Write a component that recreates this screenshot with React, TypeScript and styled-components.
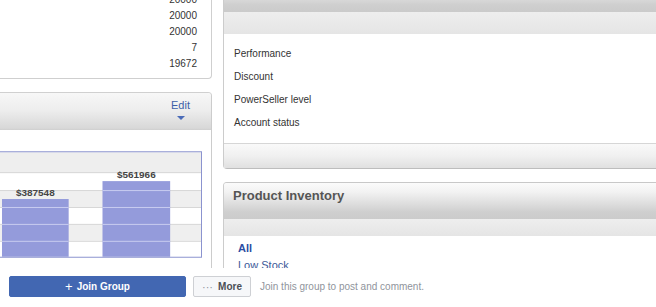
import styled, { createGlobalStyle } from 'styled-components';

const GlobalStyle = createGlobalStyle`
  html, body {
    margin: 0;
    padding: 0;
    background: #fff;
    overflow: hidden;
  }
  body {
    font-family: "Liberation Sans", Arial, Helvetica, sans-serif;
  }
`;

const totals = ['20000', '20000', '20000', '7', '19672'];
const sellerRows = ['Performance', 'Discount', 'PowerSeller level', 'Account status'];

const bars = [
  { x: 2, w: 67, top: 48, label: '$387548' },
  { x: 103, w: 68, top: 30, label: '$561966' },
];
const rowLines = [21.5, 39.5, 56.5, 73.5, 90.5];
const stripes = [
  { y: 22, h: 17, fill: '#ffffff' },
  { y: 39, h: 17, fill: '#efefef' },
  { y: 56, h: 17, fill: '#ffffff' },
  { y: 73, h: 17, fill: '#efefef' },
  { y: 90, h: 16, fill: '#ffffff' },
];

function SalesChart() {
  return (
    <svg width="204" height="107" viewBox="0 0 204 107" style={{ display: 'block' }}>
      <rect x="0" y="1" width="202" height="21" fill="#eeeeee" />
      {stripes.map((s) => (
        <rect key={s.y} x="0" y={s.y} width="202" height={s.h} fill={s.fill} />
      ))}
      {rowLines.map((y) => (
        <line key={y} x1="0" x2="202" y1={y} y2={y} stroke="#d7d7d7" />
      ))}
      {bars.map((b) => (
        <g key={b.label}>
          <rect x={b.x} y={b.top} width={b.w} height={106 - b.top} fill="#949bdb" />
          {rowLines
            .filter((y) => y > b.top)
            .map((y) => (
              <line key={y} x1={b.x} x2={b.x + b.w} y1={y} y2={y} stroke="#c9cdf0" />
            ))}
          <text
            x={b.x + b.w / 2}
            y={b.top - 3}
            textAnchor="middle"
            fontSize="10"
            fontWeight="bold"
            fill="#454545"
            fontFamily='"Liberation Sans", Arial, sans-serif'
          >
            {b.label}
          </text>
        </g>
      ))}
      <rect x="-2" y="0.5" width="204.5" height="106" fill="none" stroke="#8b93cf" />
    </svg>
  );
}

function App() {
  return (
    <>
      <GlobalStyle />
      <Post>
        <Shot>
          <Column>
            <TotalsCard>
              {totals.map((t, i) => (
                <TotalRow key={i}>{t}</TotalRow>
              ))}
            </TotalsCard>
            <ChartCard>
              <ChartHeader>
                <EditLink>
                  Edit
                  <Caret />
                </EditLink>
              </ChartHeader>
              <ChartBody>
                <SalesChart />
              </ChartBody>
            </ChartCard>
          </Column>

          <Column>
            <SideCard $cropped>
              <PanelHeader />
              <SubBand $h={22} />
              <InfoList>
                {sellerRows.map((r) => (
                  <InfoRow key={r}>{r}</InfoRow>
                ))}
              </InfoList>
              <PanelFooter />
            </SideCard>
            <SideCard>
              <PanelHeader>Product Inventory</PanelHeader>
              <SubBand $h={17} />
              <LinkList>
                <StockLink $active>All</StockLink>
                <StockLink>Low Stock</StockLink>
              </LinkList>
            </SideCard>
          </Column>
        </Shot>

        <JoinBar>
          <JoinButton>
            <Plus>+</Plus>Join Group
          </JoinButton>
          <MoreButton>
            <Dots>···</Dots>More
          </MoreButton>
          <Hint>Join this group to post and comment.</Hint>
        </JoinBar>
      </Post>
    </>
  );
}

const Post = styled.div`
  width: 656px;
  height: 307px;
  display: flex;
  flex-direction: column;
  overflow: hidden;
  background: #fff;
`;

const Shot = styled.div`
  height: 268px;
  flex: none;
  overflow: hidden;
  display: grid;
  grid-template-columns: 212px 1fr;
  column-gap: 11px;
  align-items: start;
`;

const Column = styled.div`
  display: flex;
  flex-direction: column;
  gap: 13px;
  min-width: 0;
`;

const TotalsCard = styled.div`
  margin-top: -8px;
  padding: 0 14px 6px 0;
  border-right: 1px solid #cfcfcf;
  border-bottom: 1px solid #cfcfcf;
  border-radius: 0 0 4px 0;
`;

const TotalRow = styled.div`
  text-align: right;
  font-size: 10px;
  line-height: 16px;
  color: #333;
`;

const ChartCard = styled.div`
  border-top: 1px solid #d0d0d0;
  border-right: 1px solid #cccccc;
  border-radius: 0 4px 0 0;
  height: 200px;
`;

const ChartHeader = styled.div`
  height: 37px;
  box-sizing: border-box;
  display: flex;
  justify-content: flex-end;
  padding: 6px 21px 0 0;
  background: linear-gradient(#f7f7f7, #eeeeee 45%, #d8d8d8 95%, #cfcfcf);
  border-radius: 0 4px 0 0;
`;

const EditLink = styled.div`
  display: flex;
  flex-direction: column;
  align-items: center;
  font-size: 11px;
  line-height: 13px;
  color: #3d5fa8;
`;

const Caret = styled.span`
  margin-top: 4px;
  width: 0;
  height: 0;
  border-left: 4px solid transparent;
  border-right: 4px solid transparent;
  border-top: 4px solid #4a6bb8;
`;

const ChartBody = styled.div`
  padding: 21px 8px 0 0;
  display: flex;
  justify-content: flex-end;
`;

const SideCard = styled.div<{ $cropped?: boolean }>`
  border-left: 1px solid #cccccc;
  border-top: ${(p) => (p.$cropped ? 'none' : '1px solid #c8c8c8')};
  border-radius: ${(p) => (p.$cropped ? '0 0 0 4px' : '4px 0 0 0')};
  margin-top: ${(p) => (p.$cropped ? '-24px' : '0')};
  overflow: hidden;
`;

const PanelHeader = styled.div`
  height: 36px;
  box-sizing: border-box;
  padding: 5px 9px 0;
  font-size: 13px;
  line-height: 16px;
  font-weight: bold;
  color: #555;
  background: linear-gradient(#fbfbfb, #f2f2f2 25%, #dcdcdc 60%, #cfcfcf 80%, #cbcbcb);
`;

const SubBand = styled.div<{ $h: number }>`
  height: ${(p) => p.$h}px;
  background: linear-gradient(#eeeeee, #e5e5e5);
`;

const InfoList = styled.div`
  padding: 8px 0 9px 10px;
`;

const InfoRow = styled.div`
  font-size: 10px;
  line-height: 23px;
  color: #333;
`;

const PanelFooter = styled.div`
  height: 24px;
  border-top: 1px solid #d6d6d6;
  border-bottom: 1px solid #bdbdbd;
  background: linear-gradient(#f9f9f9, #f0f0f0 50%, #e0e0e0);
`;

const LinkList = styled.div`
  padding: 4px 14px;
  display: flex;
  flex-direction: column;
`;

const StockLink = styled.a<{ $active?: boolean }>`
  font-size: 11px;
  line-height: 17px;
  font-weight: ${(p) => (p.$active ? 'bold' : 'normal')};
  color: ${(p) => (p.$active ? '#2c4ea3' : '#3b5998')};
  text-decoration: none;
`;

const JoinBar = styled.div`
  flex: 1;
  display: flex;
  align-items: flex-start;
  gap: 7px;
  padding: 8px 0 0 9px;
  background: #fff;
`;

const JoinButton = styled.button`
  width: 177px;
  height: 21px;
  padding: 0;
  border: 1px solid #4267b2;
  border-radius: 2px;
  background: #4267b2;
  color: #fff;
  font-family: inherit;
  font-size: 10px;
  font-weight: bold;
  display: flex;
  align-items: center;
  justify-content: center;
  gap: 4px;
`;

const Plus = styled.span`
  font-size: 13px;
  font-weight: normal;
  line-height: 1;
  margin-top: -1px;
`;

const MoreButton = styled.button`
  width: 58px;
  height: 21px;
  padding: 0;
  border: 1px solid #ced0d4;
  border-radius: 2px;
  background: #f6f7f9;
  color: #4b4f56;
  font-family: inherit;
  font-size: 10px;
  font-weight: bold;
  display: flex;
  align-items: center;
  justify-content: center;
  gap: 5px;
`;

const Dots = styled.span`
  color: #90949c;
  font-weight: normal;
  font-size: 11px;
  letter-spacing: 0;
`;

const Hint = styled.span`
  margin-left: 2px;
  font-size: 10px;
  line-height: 21px;
  color: #90949c;
`;

export default App;
